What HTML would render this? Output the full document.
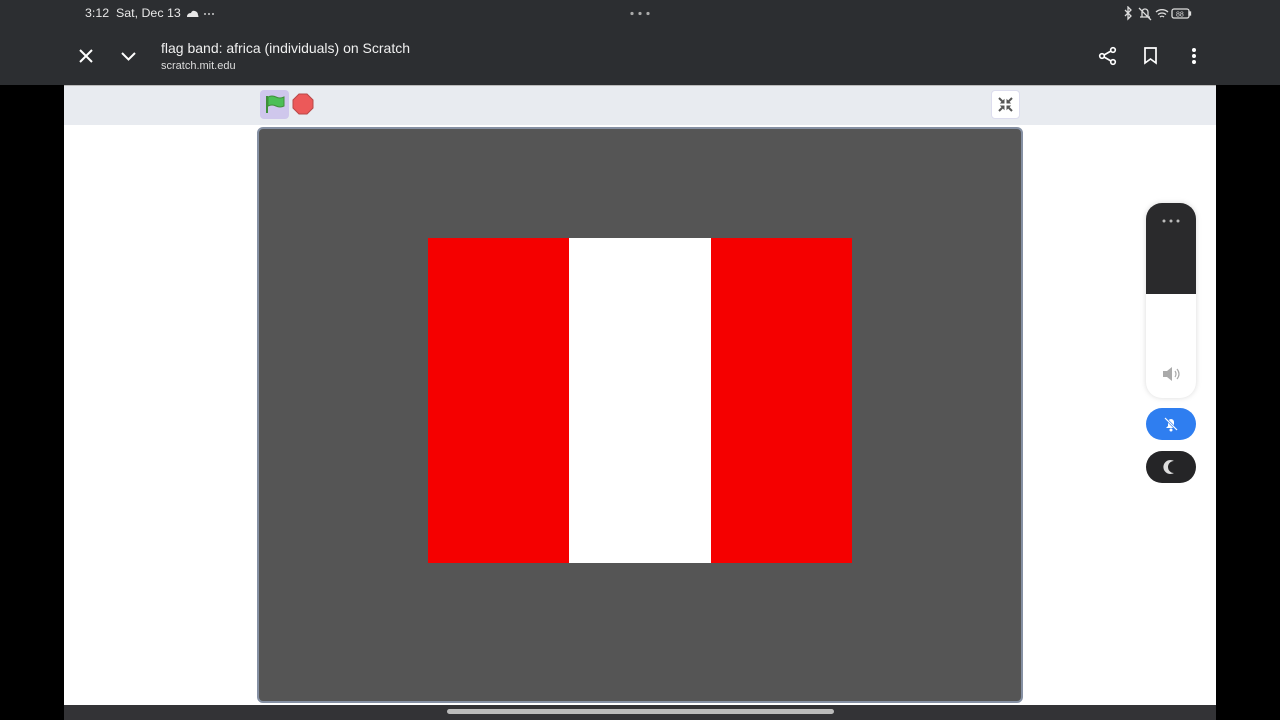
<!DOCTYPE html>
<html><head><style>
*{margin:0;padding:0;box-sizing:border-box}
body{width:1280px;height:720px;background:#000;position:relative;overflow:hidden;font-family:"Liberation Sans",Arial,sans-serif}
.a{position:absolute}
</style></head><body>
<div class="a" style="left:0;top:0;width:1280px;height:85px;background:#2c2e31"></div>
<div class="a" style="left:85px;top:6px;color:#e8e8e8;font-size:12.4px">3:12&nbsp; Sat, Dec 13</div>
<svg class="a" style="left:186px;top:9px" width="30" height="10"><path d="M1 8 Q1 4 5 4 Q6 1 9 2 Q12 3 12 6 Q13 8 12 8Z" fill="#e8e8e8"/><circle cx="19" cy="5" r="1" fill="#ccc"/><circle cx="23" cy="5" r="1" fill="#ccc"/><circle cx="27" cy="5" r="1" fill="#ccc"/></svg>
<svg class="a" style="left:630px;top:11px" width="20" height="5"><circle cx="2" cy="2.5" r="1.6" fill="#aaa"/><circle cx="10" cy="2.5" r="1.6" fill="#aaa"/><circle cx="18" cy="2.5" r="1.6" fill="#aaa"/></svg>
<svg class="a" style="left:1122px;top:6px" width="75" height="15" fill="none" stroke="#ddd" stroke-width="1.3"><path d="M3 4l6 6-3 3V1l3 3-6 6"/><path d="M18 11h10M20 11V6a3 3 0 016 0v5M17 2l12 12"/><path d="M34 6a9 9 0 0112 0M36 8.5a6 6 0 018 0M38 11a3 3 0 014 0"/><rect x="50" y="3" width="17" height="9" rx="2"/><rect x="67" y="6" width="1.5" height="3" fill="#ddd"/><text x="54" y="10.5" font-size="7" fill="#ddd" stroke="none" font-family="Liberation Sans">88</text></svg>
<svg class="a" style="left:78px;top:48px" width="16" height="16" stroke="#fff" stroke-width="2"><path d="M2 2l12 12M14 2L2 14"/></svg>
<svg class="a" style="left:120px;top:50px" width="17" height="12" fill="none" stroke="#fff" stroke-width="2"><path d="M2 3l6.5 6.5L15 3"/></svg>
<div class="a" style="left:161px;top:40px;color:#f0f0f0;font-size:14px">flag band: africa (individuals) on Scratch</div>
<div class="a" style="left:161px;top:60px;color:#ddd;font-size:11px">scratch.mit.edu</div>
<svg class="a" style="left:1098px;top:46px" width="20" height="20" fill="none" stroke="#fff" stroke-width="1.6"><circle cx="15" cy="4" r="2.3"/><circle cx="4" cy="10" r="2.3"/><circle cx="15" cy="16" r="2.3"/><path d="M6 9l7-4M6 11l7 4"/></svg>
<svg class="a" style="left:1143px;top:46px" width="16" height="20" fill="none" stroke="#fff" stroke-width="1.7"><path d="M2 2h11v15l-5.5-4L2 17z"/></svg>
<svg class="a" style="left:1191px;top:47px" width="6" height="18" fill="#fff"><circle cx="3" cy="3" r="2"/><circle cx="3" cy="9" r="2"/><circle cx="3" cy="15" r="2"/></svg>
<div class="a" style="left:64px;top:85px;width:1152px;height:620px;background:#fff"></div>
<div class="a" style="left:64px;top:85px;width:1152px;height:40px;background:#e8ebf0;border-top:1px solid #bbb"></div>
<div class="a" style="left:260px;top:90px;width:29px;height:29px;background:#cfc7ec;border-radius:4px"></div>
<svg class="a" style="left:264px;top:94px" width="22" height="20"><path d="M3 2v17" stroke="#3f8f3a" stroke-width="2"/><path d="M4 3q4-2 8 0t8 0v9q-4 2-8 0t-8 0z" fill="#4cbf56" stroke="#3f8f3a"/></svg>
<svg class="a" style="left:292px;top:93px" width="22" height="22"><polygon points="7,1 15,1 21,7 21,15 15,21 7,21 1,15 1,7" fill="#ec5959" stroke="#b84848"/></svg>
<div class="a" style="left:991px;top:90px;width:29px;height:29px;background:#fff;border-radius:4px;border:1px solid #dde"></div>
<svg class="a" style="left:997px;top:96px" width="17" height="17" stroke="#555" stroke-width="2" fill="#555"><path d="M2 2l4 4M15 2l-4 4M2 15l4-4M15 15l-4-4"/><path d="M7 4v3H4zM10 4v3h3zM7 13v-3H4zM10 13v-3h3z" stroke-width="1"/></svg>
<div class="a" style="left:257px;top:127px;width:766px;height:576px;background:#555;border:2px solid #8590a3;border-radius:6px"></div>
<div class="a" style="left:428px;top:238px;width:141px;height:325px;background:#f50000"></div>
<div class="a" style="left:569px;top:238px;width:142px;height:325px;background:#fff"></div>
<div class="a" style="left:711px;top:238px;width:141px;height:325px;background:#f50000"></div>
<div class="a" style="left:1146px;top:203px;width:50px;height:195px;border-radius:16px;background:#fff;box-shadow:0 0 6px rgba(0,0,0,.15);overflow:hidden"><div style="height:91px;background:#2a2a2c"></div></div>
<svg class="a" style="left:1162px;top:219px" width="18" height="4" fill="#bbb"><circle cx="2" cy="2" r="1.5"/><circle cx="9" cy="2" r="1.5"/><circle cx="16" cy="2" r="1.5"/></svg>
<svg class="a" style="left:1162px;top:366px" width="20" height="16"><path d="M1 5h4l5-4v14l-5-4H1z" fill="#aaa"/><path d="M13 5q2 3 0 6M15 3q4 5 0 10" stroke="#aaa" fill="none" stroke-width="1.2"/></svg>
<div class="a" style="left:1146px;top:408px;width:50px;height:32px;border-radius:16px;background:#2f7ef0"></div>
<svg class="a" style="left:1163px;top:416px" width="16" height="16" fill="#fff"><path d="M3 12h10l-2-2V6a3 3 0 00-6 0v4z"/><circle cx="8" cy="14" r="1.5"/><path d="M2 2l12 12" stroke="#2f7ef0" stroke-width="2.5"/><path d="M2 2l12 12" stroke="#fff" stroke-width="1.2"/></svg>
<div class="a" style="left:1146px;top:451px;width:50px;height:32px;border-radius:16px;background:#252527"></div>
<svg class="a" style="left:1163px;top:459px" width="16" height="16"><path d="M11 2a7 7 0 100 12 6 6 0 010-12z" fill="#ddd"/></svg>
<div class="a" style="left:64px;top:705px;width:1152px;height:15px;background:#333336"></div>
<div class="a" style="left:447px;top:709px;width:387px;height:5px;border-radius:3px;background:#bbb"></div>
</body></html>
